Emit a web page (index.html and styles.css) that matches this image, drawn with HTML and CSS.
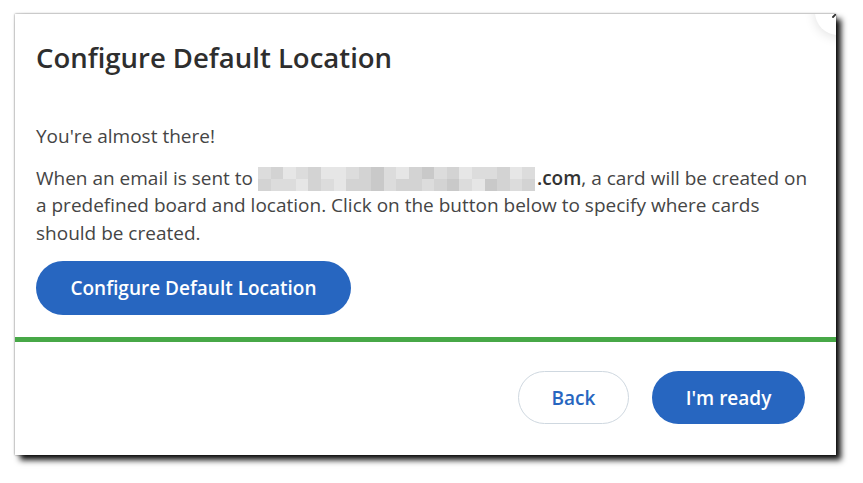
FILE: index.html
```html
<!DOCTYPE html>
<html lang="en">
<head>
<meta charset="utf-8">
<title>Configure Default Location</title>
<link rel="stylesheet" href="styles.css">
</head>
<body>
<div class="page">
  <div class="dialog">
    <button class="close" aria-label="Close">
      <svg viewBox="0 0 24 24" width="20" height="20"><path d="M6 6 L18 18 M18 6 L6 18" stroke="#333" stroke-width="2.2" stroke-linecap="round" fill="none"/></svg>
    </button>
    <div class="body">
      <h1 class="title">Configure Default Location</h1>
      <p class="lead">You're almost there!</p>
      <p class="text">When an email is sent to <span class="blur"><i class="b"></i><i class="c"></i><i class="a"></i><i class="b"></i><i class="c"></i><i class="a"></i><i class="a"></i><i class="b"></i><i class="c"></i><i class="d"></i><i class="b"></i><i class="a"></i><i class="c"></i><i class="d"></i><i class="b"></i><i class="c"></i><i class="a"></i><i class="b"></i><i class="b"></i><i class="c"></i><i class="a"></i><i class="b"></i><i class="c"></i><i class="b"></i><i class="b"></i><i class="a"></i><i class="c"></i><i class="b"></i><i class="a"></i><i class="c"></i><i class="c"></i><i class="d"></i><i class="b"></i><i class="c"></i><i class="c"></i><i class="b"></i><i class="c"></i><i class="d"></i><i class="b"></i><i class="a"></i><i class="d"></i><i class="c"></i><i class="b"></i><i class="c"></i></span><b>.com</b>, a card will be created on a predefined board and location. Click on the button below to specify where cards should be created.</p>
      <button class="btn btn-primary btn-config">Configure Default Location</button>
    </div>
    <div class="footer">
      <button class="btn btn-outline">Back</button>
      <button class="btn btn-primary">I'm ready</button>
    </div>
  </div>
</div>
</body>
</html>
```
FILE: styles.css
```css
* { box-sizing: border-box; }
html, body { margin: 0; padding: 0; background: #fff; }
body { font-family: "Open Sans", "Noto Sans", sans-serif; min-height: 483px; }
.page { padding: 14px 0 28px 15px; }
.dialog {
  position: relative;
  width: 821px;
  height: 441px;
  background: #fff;
  overflow: hidden;
  box-shadow: 0 0 2px rgba(0,0,0,0.55), 5px 5px 6px rgba(0,0,0,0.95);
  display: flex;
  flex-direction: column;
}
.close {
  position: absolute;
  top: -25px;
  right: -25px;
  width: 46px;
  height: 46px;
  border-radius: 50%;
  border: none;
  background: #fff;
  box-shadow: 0 2px 12px rgba(0,0,0,0.12);
  padding: 0;
  display: flex;
  align-items: center;
  justify-content: center;
}
.body { padding: 25px 21px 22px 21px; border-bottom: 5px solid #47a847; }
.title {
  margin: 0 0 46px 0;
  font-size: 27.5px;
  font-weight: 600;
  color: #2e2e2e;
  line-height: 38px;
}
.lead, .text {
  margin: 0 0 14px 0;
  font-size: 19px;
  line-height: 27.5px;
  color: #454545;
}
.text b { font-weight: 600; color: #333; }
.blur {
  display: inline-flex;
  flex-wrap: wrap;
  width: 278px;
  height: 24px;
  vertical-align: middle;
  margin-right: 1px;
}
.blur i { display: block; width: 12.6px; height: 12px; }
.blur .a { background: #e6e6e6; }
.blur .b { background: #dcdcdc; }
.blur .c { background: #d3d3d3; }
.blur .d { background: #c9c9c9; }
.btn {
  font-family: "Open Sans", "Noto Sans", sans-serif;
  font-size: 19px;
  font-weight: 600;
  height: 54px;
  border-radius: 27px;
  padding: 0;
  border: 1px solid transparent;
  cursor: pointer;
}
.btn-primary { background: #2766c0; color: #fff; }
.btn-outline { background: #fff; color: #2766c0; border-color: #cfd8e0; }
.btn-config { width: 315px; margin-top: 0; }
.footer {
  display: flex;
  justify-content: flex-end;
  gap: 23px;
  padding: 29px 31px 0 0;
}
.footer .btn { height: 53px; }
.footer .btn-outline { width: 111px; }
.footer .btn-primary { width: 153px; }
```
